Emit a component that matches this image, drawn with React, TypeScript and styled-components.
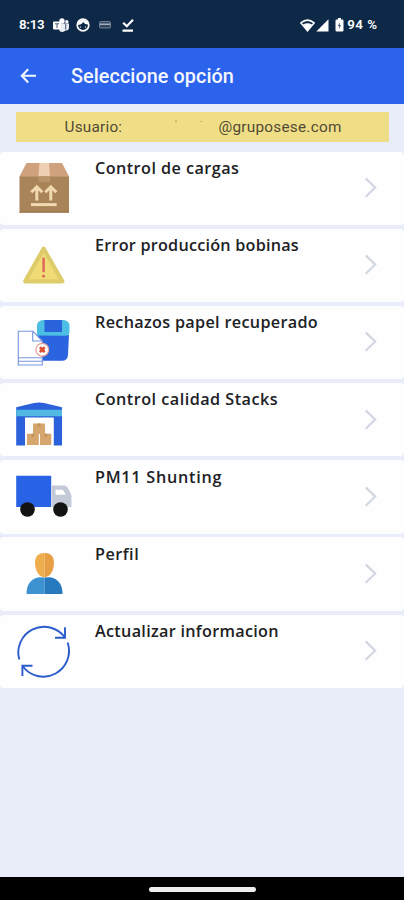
import React from 'react';
import styled, { createGlobalStyle } from 'styled-components';

const GlobalStyle = createGlobalStyle`
  * { box-sizing: border-box; }
  body { margin: 0; background: #e9edf9; }
`;

const Screen = styled.div`
  width: 404px;
  height: 900px;
  display: flex;
  flex-direction: column;
  overflow: hidden;
  background: #e9edf9;
  font-family: Roboto, sans-serif;
`;

const StatusBar = styled.header`
  height: 48px;
  flex: none;
  display: flex;
  align-items: center;
  justify-content: space-between;
  padding: 2px 26.5px 0 19px;
  background: #0e2947;
  color: #fff;
`;

const StatusGroup = styled.div`
  display: flex;
  align-items: center;
`;

const StatusText = styled.span<{ $spacing: number; $before?: number }>`
  margin-left: ${(p) => p.$before ?? 0}px;
  font-size: 13.3px;
  font-weight: 600;
  line-height: 16px;
  letter-spacing: ${(p) => p.$spacing}px;
  white-space: pre;
`;

const StatusIcon = styled.svg<{ $gap: number }>`
  display: block;
  margin-left: ${(p) => p.$gap}px;
`;

const TitleBar = styled.div`
  height: 55.5px;
  flex: none;
  display: flex;
  align-items: center;
  padding: 3px 0 0 20px;
  background: #2b63ed;
  color: #f4f7ff;
`;

const BackButton = styled.button`
  width: 51px;
  padding: 0 0 2px;
  border: 0;
  background: none;
  color: inherit;
  svg { display: block; }
`;

const Title = styled.h1`
  margin: 0;
  font-size: 19.8px;
  font-weight: 500;
  line-height: 26px;
  letter-spacing: 0.08px;
`;

const UserBanner = styled.div`
  height: 30px;
  flex: none;
  display: grid;
  grid-template-columns: 109px 45px 1fr;
  align-items: center;
  margin: 8px 15px 10px 16px;
  padding: 1px 0 0 48.5px;
  background: #f0de87;
  color: #514a34;
  font-size: 15.3px;
  line-height: 20px;
`;

const UserText = styled.span<{ $spacing: number }>`
  letter-spacing: ${(p) => p.$spacing}px;
`;

const NameMarks = styled.svg`
  display: block;
  margin-bottom: 12px;
`;

const Menu = styled.nav`
  flex: 1;
  display: flex;
  flex-direction: column;
  gap: 3.8px;
`;

const MenuCard = styled.a`
  height: 73.4px;
  flex: none;
  display: grid;
  grid-template-columns: 95px 1fr 41px;
  border-radius: 4px;
  background: #fefeff;
`;

const CardIcon = styled.svg`
  display: block;
`;

const CardLabel = styled.span<{ $spacing: number }>`
  padding-top: 5.4px;
  color: #202124;
  font-family: 'Open Sans', sans-serif;
  font-size: 16.2px;
  font-weight: 600;
  line-height: 23px;
  letter-spacing: ${(p) => p.$spacing}px;
  white-space: nowrap;
`;

const Chevron = styled.svg`
  display: block;
  margin-top: 24.6px;
`;

const GestureBar = styled.footer`
  height: 23px;
  flex: none;
  display: flex;
  justify-content: center;
  padding: 9.5px 0 0 1px;
  background: #000;
`;

const GestureHandle = styled.div`
  width: 107px;
  height: 5px;
  border-radius: 3px;
  background: #eee;
`;

const BoxArt = () => (
  <>
    <path d="M26.5 11H62L69 24.5H19.5Z" fill="#d0a17d" />
    <path d="M19.5 24.3H69V60.7H19.5Z" fill="#a98459" />
    <path d="M39.5 11H49L50 24.3H38.5Z" fill="#f0d0b5" />
    <path d="M38.5 24.3H50V30H38.5Z" fill="#b99468" />
    <path d="M19.5 60H69" stroke="#967249" strokeWidth="1.2" />
    <g stroke="#f0d9af" strokeWidth="3" fill="none">
      <path d="M36.8 48.5V35.5M31.3 40.3L36.8 34.8L42.3 40.3" />
      <path d="M50.8 48.5V35.5M45.3 40.3L50.8 34.8L56.3 40.3" />
      <path d="M31 52.6H56.7" />
    </g>
  </>
);

const WarningArt = () => (
  <>
    <path d="M43.6 19.8L62.3 52.3H25.2Z" fill="#f1db76" stroke="#decb69" strokeWidth="4.2" strokeLinejoin="round" />
    <path d="M43.6 28.7V43.2" stroke="#df655a" strokeWidth="2.4" />
    <circle cx="43.6" cy="47.2" r="1.4" fill="#df655a" />
  </>
);

const RejectArt = () => (
  <>
    <path d="M37.5 29H69L68 49Q67.5 54.8 62 54.8H44Q38 54.8 38 49Z" fill="#2a65df" />
    <path d="M37 29.5V20.5Q37 14 43.5 14H63Q69.5 14 69.5 20.5V26Q69.5 29.7 65.8 29.7Z" fill="#4cbee3" />
    <path d="M44.5 14H62V26H44.5Z" fill="#2863dc" />
    <path d="M18.3 25.3H33L42.3 35V59H18.3Z" fill="#fff" stroke="#7795df" strokeWidth="1.1" />
    <path d="M32.7 25.3V35H42.3M18.3 51.8H42.3M18.3 55.3H42.3" fill="none" stroke="#7795df" strokeWidth="1.1" />
    <circle cx="42.3" cy="43.7" r="6.4" fill="#fff" stroke="#e5a093" strokeWidth="1.2" />
    <path d="M39.9 41.3L44.7 46.1M44.7 41.3L39.9 46.1" stroke="#dd4d32" strokeWidth="2.7" />
  </>
);

const WarehouseArt = () => (
  <>
    <path d="M16.2 24.3L34 20Q39 18.9 44 20L62 24.3V62.5H53.8V34.6H25V62.5H16.2Z" fill="#2b62dc" />
    <path d="M16.2 26.7H62V33.2H16.2Z" fill="#51b9e2" />
    <path d="M33 40.6H45V51H33ZM27 50.8H38.8V62H27ZM40 50.8H51.3V62H40Z" fill="#d6a66f" />
    <path d="M37.5 40.6H40.5V43.5H37.5ZM31.5 50.8H34.5V53.7H31.5ZM44.2 50.8H47.2V53.7H44.2Z" fill="#c59159" />
  </>
);

const TruckArt = () => (
  <>
    <path d="M16.2 15.8H51.2V47H16.2Z" fill="#2862e5" />
    <path d="M51.8 25.5H64Q66.5 25.5 67.6 27.5L71.4 35V47H51.8Z" fill="#c4c9d8" />
    <path d="M55.5 29.7H62.8L65.8 34.8H55.5Z" fill="#fff" />
    <circle cx="27.5" cy="49.5" r="7.3" fill="#131313" />
    <circle cx="60.5" cy="49.5" r="7.3" fill="#131313" />
  </>
);

const ProfileArt = () => (
  <>
    <path d="M44.5 40.5L39 40.2C30 42 26.5 48 26.5 57H44.5Z" fill="#3d93d2" />
    <path d="M44.5 40.5L50 40.2C59 42 62.5 48 62.5 57H44.5Z" fill="#2779bd" />
    <path d="M44.5 16C36 16 34.2 22.3 35.3 29.3C36.2 35.8 40 40.2 44.5 40.2Z" fill="#efae4e" />
    <path d="M44.5 16C53 16 54.8 22.3 53.7 29.3C52.8 35.8 49 40.2 44.5 40.2Z" fill="#e6a043" />
  </>
);

const RefreshArt = () => (
  <g fill="none" stroke="#2a5ccc" strokeWidth="1.9">
    <path d="M19.3 44.5A25.7 25.7 0 0 1 64.7 22.2" />
    <path d="M65 12.3V22.7H55" />
    <path d="M67.6 27.5A25.7 25.7 0 0 1 22.5 51" />
    <path d="M22.4 61V50.8H32.5" />
  </g>
);

const items = [
  { label: 'Control de cargas', Art: BoxArt, spacing: 0.45 },
  { label: 'Error producción bobinas', Art: WarningArt, spacing: 0.23 },
  { label: 'Rechazos papel recuperado', Art: RejectArt, spacing: 0.32 },
  { label: 'Control calidad Stacks', Art: WarehouseArt, spacing: 0.48 },
  { label: 'PM11 Shunting', Art: TruckArt, spacing: 0.74 },
  { label: 'Perfil', Art: ProfileArt, spacing: 0.5 },
  { label: 'Actualizar informacion', Art: RefreshArt, spacing: 0.3 },
];

export default function App() {
  return (
    <>
      <GlobalStyle />
      <Screen>
        <StatusBar>
          <StatusGroup>
            <StatusText $spacing={-0.25}>8:13</StatusText>
            <StatusIcon $gap={9} width="16" height="15" viewBox="0 0 16 15">
              <circle cx="9" cy="3" r="2.7" fill="#fff" />
              <circle cx="13.8" cy="3.8" r="1.7" fill="#fff" />
              <path d="M6 5.5H16V10Q15.5 13 12.5 12.5Q10 15 6.5 13Z" fill="#e9edf4" />
              <rect x="0" y="3.5" width="8" height="8" rx="1" fill="#fff" />
              <path d="M2 5.7H6M4 5.7V10M12.7 6V11.5" stroke="#52667f" strokeWidth="1.1" />
            </StatusIcon>
            <StatusIcon $gap={7} width="14" height="14" viewBox="0 0 14 14">
              <circle cx="7" cy="7" r="5.8" fill="none" stroke="#fff" strokeWidth="1.7" />
              <path d="M1.3 7Q5.5 7 7.2 4Q9 7 12.8 6.5A6 6 0 0 0 1.3 6Z" fill="#fff" />
              <path d="M4.4 8.4V9.4M9.5 8.4V9.4" stroke="#fff" strokeWidth="1.2" />
            </StatusIcon>
            <StatusIcon $gap={9} width="12" height="8" viewBox="0 0 12 8">
              <rect x="0.6" y="0.6" width="10.8" height="6.4" rx="1" fill="#30455f" stroke="#77879a" />
              <path d="M1 3.2H11" stroke="#c5ccd5" strokeWidth="1.2" />
            </StatusIcon>
            <StatusIcon $gap={10} width="14" height="15" viewBox="0 0 14 15">
              <path d="M2.2 4.8L5.8 8.2L12 1.8M1.5 12.6H12" fill="none" stroke="#fff" strokeWidth="2.2" />
            </StatusIcon>
          </StatusGroup>
          <StatusGroup>
            <StatusIcon $gap={0} width="15" height="13" viewBox="0 0 15 13">
              <path d="M0.9 3.9Q7.5 -1.7 14.1 3.9L7.5 11.8Z" fill="none" stroke="#fff" strokeWidth="1.5" />
              <path d="M2.9 5.6Q7.5 3 12.1 5.6L7.5 11.8Z" fill="#fff" />
            </StatusIcon>
            <StatusIcon $gap={1} width="13" height="13" viewBox="0 0 13 13">
              <path d="M12.5 0.3V12.5H0.3Z" fill="#fff" />
            </StatusIcon>
            <StatusIcon $gap={6} width="9" height="14" viewBox="0 0 9 14">
              <path d="M3 0H6V1.5H7.3Q8.5 1.5 8.5 2.7V12.2Q8.5 13.5 7.3 13.5H1.7Q0.5 13.5 0.5 12.2V2.7Q0.5 1.5 1.7 1.5H3Z" fill="#fff" />
              <path d="M4.8 4.2L3 8H4.4L4 11L6 7.2H4.6Z" fill="#263d59" />
            </StatusIcon>
            <StatusText $spacing={0.5} $before={3}>94 %</StatusText>
          </StatusGroup>
        </StatusBar>
        <TitleBar>
          <BackButton aria-label="Volver">
            <svg width="17" height="16" viewBox="0 0 17 16">
              <path d="M8.2 1.2L1.8 7.8L8.2 14.4M1.8 7.8H16" fill="none" stroke="currentColor" strokeWidth="2.1" />
            </svg>
          </BackButton>
          <Title>Seleccione opción</Title>
        </TitleBar>
        <UserBanner>
          <UserText $spacing={0.24}>Usuario:</UserText>
          <NameMarks width="30" height="3" viewBox="0 0 30 3">
            <circle cx="2" cy="1.3" r="0.7" fill="#8f8250" />
            <circle cx="27" cy="1.3" r="0.6" fill="#a89a5d" />
          </NameMarks>
          <UserText $spacing={0.26}>@gruposese.com</UserText>
        </UserBanner>
        <Menu>
          {items.map(({ label, Art, spacing }) => (
            <MenuCard key={label}>
              <CardIcon width="80" height="73" viewBox="0 0 80 73">
                <Art />
              </CardIcon>
              <CardLabel $spacing={spacing}>{label}</CardLabel>
              <Chevron width="16" height="24" viewBox="0 0 16 24">
                <path d="M2.7 2.4L12.2 11.6L2.7 20.8" fill="none" stroke="#d3d7e2" strokeWidth="2.2" />
              </Chevron>
            </MenuCard>
          ))}
        </Menu>
        <GestureBar>
          <GestureHandle />
        </GestureBar>
      </Screen>
    </>
  );
}
